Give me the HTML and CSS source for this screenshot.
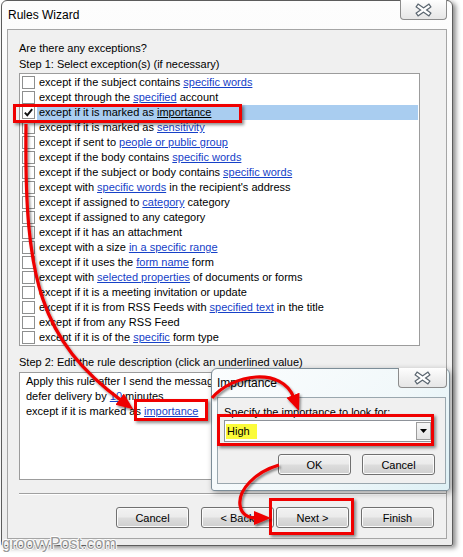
FILE: index.html
```html
<!DOCTYPE html>
<html>
<head>
<meta charset="utf-8">
<link rel="stylesheet" href="styles.css">
</head>
<body>
<div class="page">
  <div class="window">
    <div class="titlebar">
      <span class="title">Rules Wizard</span>
      <div class="close">
        <svg width="45" height="18" viewBox="0 0 45 18">
          <g transform="translate(22.5 9)">
            <path d="M-5,-3.5 L5,3.5 M5,-3.5 L-5,3.5" stroke="#5b6670" stroke-width="4.6" stroke-linecap="square" fill="none"/>
            <path d="M-5,-3.5 L5,3.5 M5,-3.5 L-5,3.5" stroke="#ffffff" stroke-width="2.2" stroke-linecap="square" fill="none"/>
          </g>
        </svg>
      </div>
    </div>
    <div class="client">
      <div class="label q">Are there any exceptions?</div>
      <div class="label">Step 1: Select exception(s) (if necessary)</div>
      <ul class="list">
        <li class="row"><span class="cb"></span><span class="txt">except if the subject contains <a>specific words</a></span></li>
        <li class="row"><span class="cb"></span><span class="txt">except through the <a>specified</a> account</span></li>
        <li class="row sel"><span class="cb"><svg width="11" height="11" viewBox="0 0 11 11"><path d="M1.8,5.6 L4.3,8.2 L9.2,2.2" stroke="#111" stroke-width="1.9" fill="none"/></svg></span><span class="txt">except if it is marked as <a>importance</a></span></li>
        <li class="row"><span class="cb"></span><span class="txt">except if it is marked as <a>sensitivity</a></span></li>
        <li class="row"><span class="cb"></span><span class="txt">except if sent to <a>people or public group</a></span></li>
        <li class="row"><span class="cb"></span><span class="txt">except if the body contains <a>specific words</a></span></li>
        <li class="row"><span class="cb"></span><span class="txt">except if the subject or body contains <a>specific words</a></span></li>
        <li class="row"><span class="cb"></span><span class="txt">except with <a>specific words</a> in the recipient's address</span></li>
        <li class="row"><span class="cb"></span><span class="txt">except if assigned to <a>category</a> category</span></li>
        <li class="row"><span class="cb"></span><span class="txt">except if assigned to any category</span></li>
        <li class="row"><span class="cb"></span><span class="txt">except if it has an attachment</span></li>
        <li class="row"><span class="cb"></span><span class="txt">except with a size <a>in a specific range</a></span></li>
        <li class="row"><span class="cb"></span><span class="txt">except if it uses the <a>form name</a> form</span></li>
        <li class="row"><span class="cb"></span><span class="txt">except with <a>selected properties</a> of documents or forms</span></li>
        <li class="row"><span class="cb"></span><span class="txt">except if it is a meeting invitation or update</span></li>
        <li class="row"><span class="cb"></span><span class="txt">except if it is from RSS Feeds with <a>specified text</a> in the title</span></li>
        <li class="row"><span class="cb"></span><span class="txt">except if from any RSS Feed</span></li>
        <li class="row"><span class="cb"></span><span class="txt">except if it is of the <a>specific</a> form type</span></li>
      </ul>
      <div class="label step2">Step 2: Edit the rule description (click an underlined value)</div>
      <div class="desc">
        <div>Apply this rule after I send the message</div>
        <div>defer delivery by <a>10</a> minutes</div>
        <div>except if it is marked as <a>importance</a></div>
      </div>
      <div class="sep"></div>
      <div class="buttons">
        <button class="btn">Cancel</button>
        <button class="btn back">&lt; Back</button>
        <button class="btn next">Next &gt;</button>
        <button class="btn finish">Finish</button>
      </div>
    </div>
  </div>

  <div class="dialog">
    <div class="dtitle">Importance</div>
    <div class="close dclose">
      <svg width="47" height="18" viewBox="0 0 47 18">
        <g transform="translate(23.5 9)">
          <path d="M-5,-3.5 L5,3.5 M5,-3.5 L-5,3.5" stroke="#5b6670" stroke-width="4.6" stroke-linecap="square" fill="none"/>
          <path d="M-5,-3.5 L5,3.5 M5,-3.5 L-5,3.5" stroke="#ffffff" stroke-width="2.2" stroke-linecap="square" fill="none"/>
        </g>
      </svg>
    </div>
    <div class="dclient">
      <div class="label">Specify the importance to look for:</div>
      <div class="combo">
        <span class="value"><span class="hl">High</span></span>
        <span class="drop"><svg width="7" height="4" viewBox="0 0 7 4"><path d="M0,0 L7,0 L3.5,4 Z" fill="#000"/></svg></span>
      </div>
      <div class="dbuttons">
        <button class="btn">OK</button>
        <button class="btn">Cancel</button>
      </div>
    </div>
  </div>

  <div class="redbox rb1"></div>
  <div class="redbox rb2"></div>
  <div class="redbox rb3"></div>
  <div class="redbox rb4"></div>

  <svg class="arrows" width="463" height="557" viewBox="0 0 463 557">
    <defs>
      <filter id="sh" x="-20%" y="-20%" width="140%" height="140%">
        <feDropShadow dx="1.5" dy="2" stdDeviation="1.3" flood-color="#000" flood-opacity="0.45"/>
      </filter>
      <marker id="ah" markerUnits="userSpaceOnUse" markerWidth="18" markerHeight="16" refX="3" refY="8" orient="auto">
        <path d="M0,1 L17,8 L0,15 Z" fill="#ee0000"/>
      </marker>
    </defs>
    <g filter="url(#sh)" fill="none" stroke="#ee0000" stroke-width="3.2">
      <path d="M26,124 C 24,280 40,340 122,401" marker-end="url(#ah)"/>
      <path d="M212,398 C 232,374 282,366 294,398" marker-end="url(#ah)"/>
      <path d="M279,465 C 255,472 238,490 240,505 C 241,514 248,518 257,518" marker-end="url(#ah)"/>
    </g>
  </svg>

  <div class="watermark">groovyPost.com</div>
</div>
</body>
</html>
```

FILE: styles.css
```css
* { box-sizing: border-box; }

body {
  margin: 0;
  background: #ffffff;
  font-family: "Liberation Sans", Arial, sans-serif;
  font-size: 11px;
  color: #000;
}

.page {
  position: relative;
  width: 463px;
  height: 557px;
  overflow: hidden;
}

.window {
  position: relative;
  margin-left: 1px;
  width: 452px;
  height: 546px;
  border: 1px solid #5c5c5c;
  border-radius: 6px 6px 2px 2px;
  background: linear-gradient(#fdfdfd, #f3f3f3 60%, #ececec);
  box-shadow: 3px 2px 5px rgba(0, 0, 0, 0.45);
  display: flex;
  flex-direction: column;
}

.titlebar {
  position: relative;
  height: 28px;
  display: flex;
  align-items: center;
  padding-left: 6px;
  flex: none;
}

.title {
  font-size: 12px;
  color: #000;
}

.close {
  position: absolute;
  top: -1px;
  right: 5px;
  width: 47px;
  height: 20px;
  border: 1px solid #8c8c8c;
  border-top: none;
  border-radius: 0 0 4px 4px;
  background: linear-gradient(#fefefe, #f1f1f1 50%, #e6e6e6);
  display: flex;
  align-items: center;
  justify-content: center;
}

.client {
  margin: 0 5px;
  width: 440px;
  height: 510px;
  border: 1px solid #a5a5a5;
  background: #f0f0f0;
  padding: 10px 12px 0 11px;
  flex: none;
}

.label {
  line-height: 16px;
  height: 16px;
  white-space: nowrap;
}

.list {
  list-style: none;
  margin: 1px 0 0;
  padding: 1px 0 0;
  width: 401px;
  height: 273px;
  border: 1px solid #9c9c9c;
  background: #fff;
}

.row {
  height: 15px;
  display: flex;
  align-items: center;
  padding-left: 2px;
  white-space: nowrap;
}

.cb {
  flex: none;
  width: 13px;
  height: 13px;
  border: 1px solid #8e8f8f;
  background: #fff;
  display: flex;
  align-items: center;
  justify-content: center;
}

.txt {
  flex: 1;
  height: 15px;
  line-height: 15px;
  margin-left: 2px;
  padding-left: 2px;
  margin-right: 1px;
}

.sel .txt {
  background: #a9cdf0;
}

a {
  color: #1641c8;
  text-decoration: underline;
}

.sel a {
  color: #000;
}

.step2 {
  margin-top: 8px;
}

.desc {
  margin-top: 2px;
  width: 401px;
  height: 108px;
  border: 1px solid #9c9c9c;
  background: #fff;
  padding: 1px 6px;
  line-height: 15px;
  white-space: nowrap;
  overflow: hidden;
}

.sep {
  margin-top: 13px;
  width: 427px;
  height: 2px;
  border-top: 1px solid #a0a0a0;
  border-bottom: 1px solid #ffffff;
}

.buttons {
  margin-top: 12px;
  display: flex;
  justify-content: flex-end;
}

.btn {
  width: 73px;
  height: 21px;
  padding: 0;
  border: 1px solid #707070;
  border-radius: 3px;
  background: linear-gradient(#f2f2f2 0%, #ebebeb 48%, #dddddd 52%, #cfcfcf 100%);
  box-shadow: inset 0 0 0 1px #fbfbfb;
  font-family: inherit;
  font-size: 11px;
  color: #000;
}

.buttons .back { margin-left: 12px; }
.buttons .next { margin-left: 2px; }
.buttons .finish { margin-left: 12px; }

.dialog {
  position: absolute;
  left: 211px;
  top: 368px;
  width: 239px;
  height: 123px;
  border: 1px solid #7c8d98;
  border-radius: 6px 6px 3px 3px;
  background: linear-gradient(135deg, #fbfdfe 0%, #f1f8fa 60%, #ddf0f5 100%);
  box-shadow: 2px 2px 6px rgba(0, 0, 0, 0.35);
  display: flex;
  flex-direction: column;
}

.dtitle {
  height: 28px;
  padding-left: 5px;
  display: flex;
  align-items: center;
  flex: none;
  font-size: 12px;
}

.dclose {
  right: 2px;
  width: 49px;
}

.dclient {
  margin-left: 5px;
  width: 229px;
  height: 87px;
  border: 1px solid #9aa7ae;
  background: #f0f0f0;
  padding: 6px 10px 0 6px;
}

.combo {
  width: 209px;
  height: 22px;
  border: 1px solid #8d9299;
  background: #fff;
  display: flex;
  align-items: center;
  padding: 0 1px 0 1px;
}

.value {
  flex: 1;
}

.hl {
  display: inline-block;
  background: #fbfb3a;
  padding: 0 7px 0 1px;
  line-height: 15px;
}

.drop {
  width: 15px;
  height: 18px;
  border: 1px solid #9c9c9c;
  background: linear-gradient(#f6f6f6, #e4e4e4);
  display: flex;
  align-items: center;
  justify-content: center;
}

.dbuttons {
  margin-top: 12px;
  display: flex;
  justify-content: flex-end;
  gap: 11px;
}

.redbox {
  position: absolute;
  border: 3px solid #f00000;
  box-shadow: 2px 2px 3px rgba(0, 0, 0, 0.45);
}

.rb1 { left: 13px; top: 104px; width: 229px; height: 19px; }
.rb2 { left: 134px; top: 399px; width: 74px; height: 22px; }
.rb3 { left: 217px; top: 414px; width: 217px; height: 32px; }
.rb4 { left: 269px; top: 498px; width: 85px; height: 37px; }

.arrows {
  position: absolute;
  left: 0;
  top: 0;
  pointer-events: none;
}

.watermark {
  position: absolute;
  left: 2px;
  top: 535px;
  font-family: "Liberation Sans", Arial, sans-serif;
  font-size: 16px;
  color: #9a9a9a;
  text-shadow: 1px 0 0 #fff, -1px 0 0 #fff, 0 1px 0 #fff, 0 -1px 0 #fff;
}
```
